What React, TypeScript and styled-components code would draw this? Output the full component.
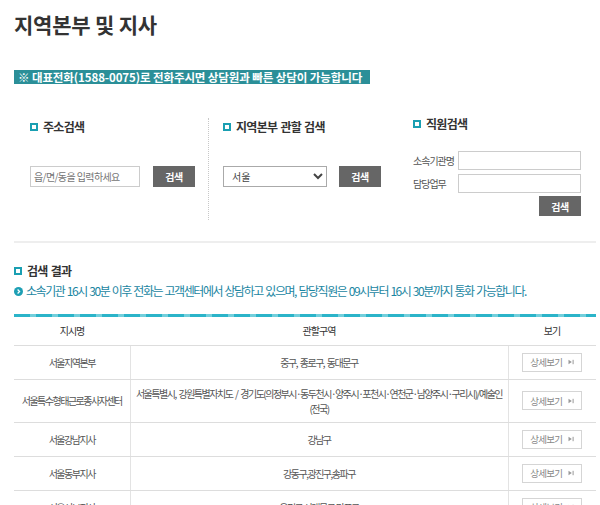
import styled, { createGlobalStyle } from 'styled-components';

const FONT = `"Noto Sans CJK KR", "Noto Sans", sans-serif`;

const GlobalStyle = createGlobalStyle`
    body {
        margin: 0;
        background: #fff;
        font-family: ${FONT};
        color: #333;
    }
    * { box-sizing: border-box; }
`

const offices = [
    { name: '서울지역본부', area: '중구, 종로구, 동대문구' },
    { name: '서울특수형태근로종사자센터', area: '서울특별시, 강원특별자치도 / 경기도(의정부시·동두천시·양주시·포천시·연천군·남양주시·구리시)/예술인 (전국)' },
    { name: '서울강남지사', area: '강남구' },
    { name: '서울동부지사', area: '강동구,광진구,송파구' },
    { name: '서울서부지사', area: '은평구,서대문구,마포구' },
]

function SquareIcon() {
    return <Bullet />
}

function InfoIcon() {
    return (
        <svg width="9" height="9" viewBox="0 0 10 10">
            <circle cx="5" cy="5" r="5" fill="#1d9fb4" />
            <path d="M4 2.8 L6.2 5 L4 7.2" stroke="#fff" strokeWidth="1.4" fill="none" />
        </svg>
    )
}

function NextIcon() {
    return (
        <svg width="6" height="6" viewBox="0 0 6 6">
            <path d="M0.5 0.8 L3.8 3 L0.5 5.2 Z" fill="#999" />
            <rect x="4.6" y="0.8" width="1" height="4.4" fill="#999" />
        </svg>
    )
}

export default function App() {
    return (
        <Page>
            <GlobalStyle />
            <Title>지역본부 및 지사</Title>
            <Banner>※ 대표전화(1588-0075)로 전화주시면 상담원과 빠른 상담이 가능합니다</Banner>

            <SearchArea>
                <SearchCol $width="195px" $pad="16px" $divider>
                    <Heading><SquareIcon />주소검색</Heading>
                    <FieldRow>
                        <TextInput placeholder="읍/면/동을 입력하세요" $width="110px" />
                        <DarkBtn $gap="13px">검색</DarkBtn>
                    </FieldRow>
                </SearchCol>

                <SearchCol $width="204px" $pad="14px">
                    <Heading><SquareIcon />지역본부 관할 검색</Heading>
                    <FieldRow>
                        <Select defaultValue="서울">
                            <option>서울</option>
                            <option>부산</option>
                            <option>대구</option>
                        </Select>
                        <DarkBtn $gap="12px">검색</DarkBtn>
                    </FieldRow>
                </SearchCol>

                <SearchCol $width="168px" $pad="0px">
                    <Heading $raise><SquareIcon />직원검색</Heading>
                    <StaffGrid>
                        <Label>소속기관명</Label>
                        <TextInput $width="123px" $height="19px" />
                        <Label>담당업무</Label>
                        <TextInput $width="123px" $height="19px" />
                        <DarkBtn $gap="0px" $end>검색</DarkBtn>
                    </StaffGrid>
                </SearchCol>
            </SearchArea>

            <Rule />

            <ResultHeading><SquareIcon />검색 결과</ResultHeading>
            <Notice><InfoIcon />소속기관 16시 30분 이후 전화는 고객센터에서 상담하고 있으며, 담당직원은 09시부터 16시 30분까지 통화 가능합니다.</Notice>

            <TableTop />
            <Table>
                <colgroup>
                    <col style={{ width: 116 }} />
                    <col style={{ width: 378 }} />
                    <col style={{ width: 88 }} />
                </colgroup>
                <thead>
                    <tr>
                        <Th $dotted>지시명</Th>
                        <Th $dotted>관할구역</Th>
                        <Th>보기</Th>
                    </tr>
                </thead>
                <tbody>
                    {offices.map(o => (
                        <tr key={o.name}>
                            <Td $line>{o.name}</Td>
                            <Td $line $wide>{o.area}</Td>
                            <Td>
                                <DetailBtn>상세보기 <NextIcon /></DetailBtn>
                            </Td>
                        </tr>
                    ))}
                </tbody>
            </Table>
        </Page>
    )
}


const Page = styled.div`
    padding: 11px 4px 0 14px;
    width: 600px;
    height: 505px;
    overflow: hidden;
`
const Title = styled.h1`
    margin: 0;
    font-size: 21px;
    line-height: 26px;
    font-weight: 700;
    letter-spacing: -0.2px;
    color: #333;
`
const Banner = styled.div`
    margin-top: 33px;
    width: 356px;
    height: 14px;
    padding-left: 4px;
    background: #2b8f98;
    color: #fff;
    font-size: 11.5px;
    line-height: 14px;
    font-weight: 700;
    letter-spacing: -0.1px;
    white-space: nowrap;
    overflow: hidden;
`
const SearchArea = styled.div`
    display: flex;
    margin-top: 34px;
    height: 102px;
`
const SearchCol = styled.div<{ $width: string; $pad: string; $divider?: boolean }>`
    width: ${p => p.$width};
    padding-left: ${p => p.$pad};
    border-right: ${p => (p.$divider ? '1px dotted #c8c8c8' : 'none')};
`
const Bullet = styled.span`
    display: inline-block;
    width: 8px;
    height: 8px;
    border: 2.5px solid #1a9fb2;
    background: #fff;
    margin-right: 5px;
    vertical-align: 0;
`
const Heading = styled.div<{ $raise?: boolean }>`
    margin-top: ${p => (p.$raise ? '-3px' : '0')};
    font-size: 12px;
    line-height: 17px;
    font-weight: 700;
    letter-spacing: -0.7px;
    word-spacing: 1px;
    color: #333;
    display: flex;
    align-items: center;
`
const FieldRow = styled.div`
    display: flex;
    align-items: center;
    margin-top: 31px;
`
const TextInput = styled.input<{ $width: string; $height?: string }>`
    width: ${p => p.$width};
    height: ${p => p.$height || '21px'};
    border: 1px solid #ccc;
    padding: 0 3px;
    font-family: ${FONT};
    font-size: 10px;
    letter-spacing: -0.6px;
    color: #555;
    outline: none;
    ::placeholder { color: #666; }
`
const Select = styled.select`
    width: 104px;
    height: 21px;
    border: 1px solid #aaa;
    border-radius: 0;
    padding: 0 4px;
    font-family: ${FONT};
    font-size: 10px;
    color: #444;
    background: #fff;
`
const DarkBtn = styled.button<{ $gap: string; $end?: boolean }>`
    margin-left: ${p => p.$gap};
    width: 42px;
    height: 21px;
    padding: 0;
    border: none;
    background: #666;
    color: #fff;
    font-family: ${FONT};
    font-size: 10px;
    font-weight: 700;
    letter-spacing: -0.5px;
    ${p => p.$end && 'grid-column: 2; justify-self: end; height: 20px; margin-top: -1px;'}
`
const StaffGrid = styled.div`
    display: grid;
    grid-template-columns: 45px 123px;
    row-gap: 4px;
    align-items: center;
    margin-top: 19px;
`
const Label = styled.span`
    font-size: 10px;
    letter-spacing: -1px;
    color: #555;
`
const Rule = styled.div`
    margin-top: 21px;
    height: 2px;
    width: 582px;
    background: #eee;
`
const ResultHeading = styled(Heading)`
    margin-top: 19px;
    font-weight: 700;
`
const Notice = styled.div`
    margin-top: 4px;
    display: flex;
    align-items: center;
    gap: 3px;
    font-size: 12px;
    line-height: 16px;
    letter-spacing: -1.45px;
    word-spacing: 1.2px;
    color: #1b86a2;
    white-space: nowrap;
`
const TableTop = styled.div`
    margin-top: 15px;
    width: 582px;
    height: 3px;
    background: repeating-linear-gradient(90deg, #2bb4c9 0 16px, #72cfdc 16px 22px);
`
const Table = styled.table`
    width: 582px;
    border-collapse: collapse;
    table-layout: fixed;
`
const Th = styled.th<{ $dotted?: boolean }>`
    position: relative;
    height: 28px;
    padding: 0;
    font-size: 10px;
    font-weight: 400;
    letter-spacing: -1px;
    color: #333;
    border-bottom: 1px solid #ddd;
    ::after {
        content: '';
        display: ${p => (p.$dotted ? 'block' : 'none')};
        position: absolute;
        right: 0;
        top: 8px;
        bottom: 8px;
        border-right: 1px dotted #bbb;
    }
`
const Td = styled.td<{ $line?: boolean; $wide?: boolean }>`
    height: 34px;
    padding: ${p => (p.$wide ? '6px 2px' : '0 2px')};
    text-align: center;
    font-size: 10px;
    line-height: 15px;
    letter-spacing: -1.5px;
    word-spacing: 2px;
    color: #555;
    border-bottom: 1px solid #ddd;
    border-right: ${p => (p.$line ? '1px solid #e3e3e3' : 'none')};
`
const DetailBtn = styled.button`
    display: inline-flex;
    align-items: center;
    justify-content: center;
    gap: 6px;
    width: 60px;
    height: 19px;
    padding: 0;
    border: 1px solid #d5d5d5;
    background: #fff;
    font-family: ${FONT};
    font-size: 9.5px;
    letter-spacing: -0.8px;
    color: #888;
`
